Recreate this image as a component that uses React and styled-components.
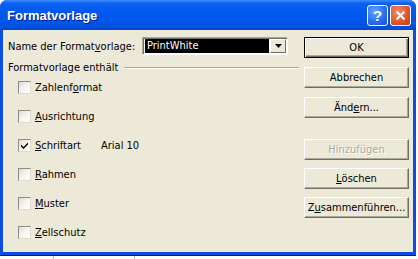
import styled, { createGlobalStyle } from 'styled-components'

const Global = createGlobalStyle`
  html, body {
    margin: 0;
    padding: 0;
    background: #fff;
  }
  body {
    font-family: "DejaVu Sans Condensed", "DejaVu Sans", sans-serif;
    font-stretch: condensed;
    font-size: 11px;
    color: #000;
  }
`

const Window = styled.div`
  width: 416px;
  height: 256px;
  box-sizing: border-box;
  background: #0a4ee4;
  border-radius: 7px 7px 0 0;
  display: flex;
  flex-direction: column;
  padding: 0 3px 3px 3px;
  border-bottom: 1px solid #00138c;
`

const TitleBar = styled.div`
  height: 30px;
  margin: 0 -3px;
  padding: 0 5px 0 7px;
  display: flex;
  align-items: center;
  border-radius: 7px 7px 0 0;
  background: linear-gradient(180deg, #3c8cff 0%, #0a5fef 12%, #0058ee 45%, #0055e6 80%, #0047d0 100%);
`

const Title = styled.span`
  flex: 1;
  font-family: "Liberation Sans", Arial, sans-serif;
  font-stretch: normal;
  font-weight: bold;
  font-size: 13px;
  color: #fff;
  text-shadow: 1px 1px 0 #0a1e8c;
`

const CaptionButton = styled.div`
  width: 21px;
  height: 21px;
  box-sizing: border-box;
  border: 1px solid #fff;
  border-radius: 3px;
  margin-left: 2px;
  display: flex;
  align-items: center;
  justify-content: center;
  color: #fff;
  font-family: "Liberation Sans", Arial, sans-serif;
  font-weight: bold;
  font-size: 15px;
  background: ${p => p.$close
    ? 'radial-gradient(circle at 35% 30%, #f08a6a 0%, #e2582e 55%, #c1381a 100%)'
    : 'radial-gradient(circle at 35% 30%, #6ba6ff 0%, #2a6ef2 55%, #1a4fd0 100%)'};
`

const Client = styled.div`
  flex: 1;
  background: #ece9d8;
  display: flex;
  padding: 7px 0 0 5px;
`

const LeftCol = styled.div`
  width: 284px;
  display: flex;
  flex-direction: column;
`

const RightCol = styled.div`
  margin-left: 12px;
  display: flex;
  flex-direction: column;
`

const NameRow = styled.div`
  display: flex;
  align-items: center;
  height: 18px;
`

const Label = styled.span`
  width: 134px;
  white-space: nowrap;
`

const Combo = styled.div`
  width: 146px;
  height: 18px;
  box-sizing: border-box;
  display: flex;
  border-top: 1px solid #aca899;
  border-left: 1px solid #aca899;
  border-right: 1px solid #fff;
  border-bottom: 1px solid #fff;
  box-shadow: inset 1px 1px 0 #716f64;
  background: #fff;
  padding: 1px;
`

const ComboField = styled.div`
  flex: 1;
  background: #000;
  color: #fff;
  line-height: 14px;
  padding-left: 2px;
  margin: 0 1px;
`

const ComboArrow = styled.div`
  width: 16px;
  height: 14px;
  box-sizing: border-box;
  background: #ece9d8;
  border-top: 1px solid #fff;
  border-left: 1px solid #fff;
  border-right: 1px solid #716f64;
  border-bottom: 1px solid #716f64;
  display: flex;
  align-items: center;
  justify-content: center;
`

const GroupHeader = styled.div`
  display: flex;
  align-items: center;
  margin-top: 6px;
  height: 13px;
`

const GroupLine = styled.div`
  flex: 1;
  margin-left: 6px;
  margin-right: -7px;
  height: 1px;
  background: #aca899;
  border-bottom: 1px solid #fff;
`

const CheckList = styled.div`
  display: flex;
  flex-direction: column;
  gap: 16px;
  margin-top: 7px;
  padding-left: 10px;
`

const CheckRow = styled.div`
  display: flex;
  align-items: center;
  height: 13px;
`

const Box = styled.div`
  width: 13px;
  height: 13px;
  box-sizing: border-box;
  border-top: 1px solid #8e8c84;
  border-left: 1px solid #8e8c84;
  border-right: 1px solid #e0ddd0;
  border-bottom: 1px solid #e0ddd0;
  background: linear-gradient(135deg, #dcdad0 0%, #f4f3ee 45%, #fff 100%);
  display: flex;
  align-items: center;
  justify-content: center;
`

const CheckText = styled.span`
  margin-left: 4px;
  white-space: nowrap;
`

const Extra = styled.span`
  margin-left: 20px;
`

const ButtonGroup = styled.div`
  display: flex;
  flex-direction: column;
  gap: ${p => p.$gap}px;
  margin-top: ${p => p.$top || 0}px;
`

const Button = styled.div`
  width: 105px;
  height: 21px;
  box-sizing: border-box;
  background: #ece9d8;
  display: flex;
  align-items: center;
  justify-content: center;
  white-space: nowrap;
  color: ${p => p.$disabled ? '#aca899' : '#000'};
  text-shadow: ${p => p.$disabled ? '1px 1px 0 #fff' : 'none'};
  border: 1px solid;
  border-color: ${p => p.$default ? '#000' : '#fff #716f64 #716f64 #fff'};
  box-shadow: ${p => p.$default
    ? 'inset 1px 1px 0 #fff, inset -1px -1px 0 #716f64, inset -2px -2px 0 #aca899'
    : 'inset -1px -1px 0 #aca899'};
`

const Sheet = styled.div`
  display: flex;
  height: 3px;
`

const Cell = styled.div`
  width: ${p => p.$w}px;
  border-right: 1px solid #c0c0c0;
`

const u = ch => <u>{ch}</u>

const checks = [
  { label: <>Zahlenf{u('o')}rmat</> },
  { label: <>{u('A')}usrichtung</> },
  { label: <>{u('S')}chriftart</>, checked: true, extra: 'Arial 10' },
  { label: <>{u('R')}ahmen</> },
  { label: <>{u('M')}uster</> },
  { label: <>{u('Z')}ellschutz</> },
]

function Tick () {
  return (
    <svg width="9" height="9" viewBox="0 0 9 9">
      <path d="M1 3.5 L3.5 6 L8 1.5 L8 3.5 L3.5 8 L1 5.5 Z" fill="#000" />
    </svg>
  )
}

export default function App () {
  return (
    <>
      <Global />
      <Window>
        <TitleBar>
          <Title>Formatvorlage</Title>
          <CaptionButton>?</CaptionButton>
          <CaptionButton $close>
            <svg width="11" height="11" viewBox="0 0 11 11">
              <path d="M1.5 1.5 L9.5 9.5 M9.5 1.5 L1.5 9.5" stroke="#fff" strokeWidth="2" />
            </svg>
          </CaptionButton>
        </TitleBar>
        <Client>
          <LeftCol>
            <NameRow>
              <Label>Name der Format{u('v')}orlage:</Label>
              <Combo>
                <ComboField>PrintWhite</ComboField>
                <ComboArrow>
                  <svg width="7" height="4" viewBox="0 0 7 4">
                    <path d="M0 0 H7 L3.5 4 Z" fill="#000" />
                  </svg>
                </ComboArrow>
              </Combo>
            </NameRow>
            <GroupHeader>
              <span>Formatvorlage enthält</span>
              <GroupLine />
            </GroupHeader>
            <CheckList>
              {checks.map((c, i) => (
                <CheckRow key={i}>
                  <Box>{c.checked && <Tick />}</Box>
                  <CheckText>{c.label}</CheckText>
                  {c.extra && <Extra>{c.extra}</Extra>}
                </CheckRow>
              ))}
            </CheckList>
          </LeftCol>
          <RightCol>
            <ButtonGroup $gap={9}>
              <Button $default>OK</Button>
              <Button>Abbrechen</Button>
              <Button>Änd{u('e')}rn...</Button>
            </ButtonGroup>
            <ButtonGroup $gap={8} $top={21}>
              <Button $disabled>Hinzufügen</Button>
              <Button>{u('L')}öschen</Button>
              <Button>Z{u('u')}sammenführen...</Button>
            </ButtonGroup>
          </RightCol>
        </Client>
      </Window>
      <Sheet>
        <Cell $w={53} />
        <Cell $w={80} />
      </Sheet>
    </>
  )
}
